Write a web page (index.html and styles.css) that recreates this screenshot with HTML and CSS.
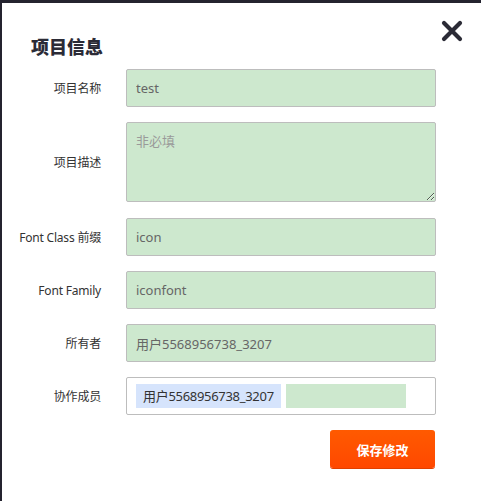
FILE: index.html
```html
<!DOCTYPE html>
<html lang="zh">
<head>
<meta charset="utf-8">
<link rel="stylesheet" href="styles.css">
</head>
<body>
<div class="modal">
  <button class="close" aria-label="close">
    <svg width="22" height="22" viewBox="0 0 22 22"><path d="M3 3 L19 19 M19 3 L3 19" stroke="#2b2b36" stroke-width="4.2" stroke-linecap="round" fill="none"/></svg>
  </button>
  <h1 class="title">项目信息</h1>
  <form class="form">
    <div class="row">
      <label class="label">项目名称</label>
      <input class="field" value="test">
    </div>
    <div class="row row-tall">
      <label class="label">项目描述</label>
      <textarea class="field area" placeholder="非必填"></textarea>
    </div>
    <div class="row">
      <label class="label">Font Class 前缀</label>
      <input class="field" value="icon">
    </div>
    <div class="row">
      <label class="label">Font Family</label>
      <input class="field" value="iconfont">
    </div>
    <div class="row">
      <label class="label">所有者</label>
      <input class="field" value="用户5568956738_3207">
    </div>
    <div class="row">
      <label class="label">协作成员</label>
      <div class="members">
        <span class="tag">用户5568956738_3207</span>
        <span class="tag-input"></span>
      </div>
    </div>
    <div class="actions">
      <button type="button" class="save">保存修改</button>
    </div>
  </form>
</div>
</body>
</html>
```
FILE: styles.css
```css
html, body {
  margin: 0;
  padding: 0;
  height: 100%;
  background: #24232f;
}
body {
  font-family: "Noto Sans", "Noto Sans CJK SC", sans-serif;
  overflow: hidden;
}
.modal {
  position: relative;
  margin: 3px 0 0 2px;
  height: 498px;
  background: #fff;
  padding: 31px 0 0 0;
  box-sizing: border-box;
}
.close {
  position: absolute;
  top: 17px;
  left: 439px;
  border: 0;
  background: none;
  padding: 0;
  width: 22px;
  height: 22px;
  cursor: pointer;
}
.close svg { display: block; }
.title {
  margin: 0 0 0 29px;
  font-size: 18px;
  line-height: 24px;
  font-weight: 900;
  color: #2b2b36;
  font-family: "Noto Sans CJK SC", sans-serif;
}
.form {
  margin-top: 11px;
  display: flex;
  flex-direction: column;
  gap: 15px;
}
.row {
  display: grid;
  grid-template-columns: 99px 310px;
  column-gap: 25px;
  align-items: center;
}
.label {
  text-align: right;
  font-size: 12px;
  color: #333;
  letter-spacing: -0.2px;
  font-family: "Noto Sans", "Noto Sans CJK SC", sans-serif;
}
.field {
  box-sizing: border-box;
  width: 310px;
  height: 38px;
  border: 1px solid #bdbdbd;
  border-radius: 2px;
  background: #cde8ce;
  padding: 0 9px;
  font-size: 13px;
  color: #666;
  font-family: "Noto Sans", "Noto Sans CJK SC", sans-serif;
  outline: none;
}
.area {
  height: 80px;
  padding: 8px 9px;
  resize: vertical;
  display: block;
}
.area::placeholder { color: #9a9a9a; }
.row-tall { margin-bottom: 1px; }
.members {
  box-sizing: border-box;
  width: 310px;
  height: 38px;
  border: 1px solid #bdbdbd;
  border-radius: 2px;
  background: #fff;
  padding: 6px 9px;
  display: flex;
  gap: 5px;
  align-items: center;
}
.tag {
  height: 24px;
  width: 145px;
  box-sizing: border-box;
  background: #d6e4fc;
  color: #333;
  font-size: 13px;
  line-height: 24px;
  padding: 0 7px;
  letter-spacing: -0.3px;
  white-space: nowrap;
}
.tag-input {
  width: 120px;
  height: 24px;
  background: #cde8ce;
}
.actions {
  display: flex;
  padding-left: 328px;
}
.save {
  width: 105px;
  height: 38px;
  border: 0;
  border-radius: 3px;
  background: linear-gradient(#ff5a00, #ff4800);
  color: #fff;
  font-size: 13px;
  font-weight: bold;
  font-family: "Noto Sans CJK SC", sans-serif;
  box-shadow: 0 1px 0 #e04000;
}
```
